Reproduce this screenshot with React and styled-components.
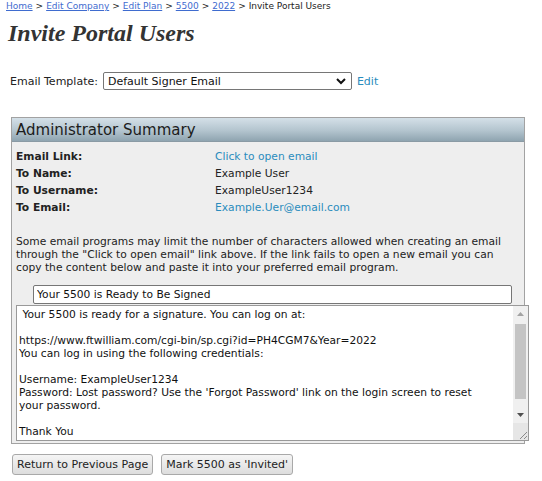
import React from "react";
import styled, { createGlobalStyle } from "styled-components";

const GlobalStyle = createGlobalStyle`
  body {
    margin: 0;
    background: #fff;
    font-family: "DejaVu Sans", Verdana, sans-serif;
    color: #222;
  }
`;

const Page = styled.div`
  padding: 0 0 0 6px;
  width: 536px;
`;

const Crumbs = styled.div`
  font-size: 9px;
  line-height: 12px;
  color: #222;
`;

const CrumbLink = styled.a`
  color: #3f6ccf;
  text-decoration: underline;
`;

const Sep = styled.span`
  margin: 0 3px;
`;

const Title = styled.h1`
  font-family: "Liberation Serif", "Times New Roman", serif;
  font-style: italic;
  font-weight: bold;
  font-size: 24px;
  line-height: 28px;
  color: #333;
  margin: 7px 0 0 2px;
`;

const TemplateRow = styled.div`
  display: flex;
  align-items: center;
  gap: 5px;
  margin: 25px 0 0 4px;
  font-size: 11px;
  height: 18px;
`;

const SelectWrap = styled.div`
  position: relative;
  width: 249px;
  height: 18px;
`;

const Select = styled.select`
  appearance: none;
  width: 100%;
  height: 18px;
  border: 1px solid #767676;
  border-radius: 2px;
  background: #fff;
  font-family: "DejaVu Sans", Verdana, sans-serif;
  font-size: 11px;
  padding: 0 0 0 4px;
  color: #111;
`;

const Chevron = styled.svg`
  position: absolute;
  right: 6px;
  top: 5px;
  pointer-events: none;
`;

const Link = styled.a`
  color: #2a8cbd;
  text-decoration: none;
`;

const Panel = styled.div`
  margin: 27px 0 0 5px;
  width: 512px;
  border: 1px solid #a2a2a2;
  background: #eeeeee;
  font-size: 10.7px;
`;

const PanelHead = styled.div`
  height: 23px;
  line-height: 24px;
  padding-left: 4px;
  font-size: 15px;
  color: #1c1c1c;
  background: linear-gradient(#d4e0e8, #b3c4ce 55%, #8fa4b0);
  border-bottom: 1px solid #8a9aa4;
`;

const PanelBody = styled.div`
  padding: 8px 0 0 4px;
`;

const InfoGrid = styled.div`
  display: grid;
  grid-template-columns: 199px 1fr;
  row-gap: 3px;
  line-height: 14px;
`;

const Label = styled.div`
  font-weight: bold;
  color: #222;
`;

const Value = styled.div`
  color: #222;
`;

const Note = styled.p`
  margin: 20px 0 0;
  line-height: 13px;
  color: #222;
  white-space: nowrap;
`;

const Subject = styled.input`
  display: block;
  box-sizing: border-box;
  margin: 11px 0 0 17px;
  width: 479px;
  height: 19px;
  border: 1px solid #767676;
  border-radius: 2px;
  padding: 0 3px;
  font-family: "DejaVu Sans", Verdana, sans-serif;
  font-size: 10.7px;
  color: #111;
  background: #fff;
`;

const BodyWrap = styled.div`
  position: relative;
  margin: 1px 0 2px 0;
  width: 513px;
  height: 136px;
`;

const Body = styled.textarea`
  display: block;
  box-sizing: border-box;
  width: 100%;
  height: 100%;
  border: 1px solid #999;
  padding: 2px 18px 0 2px;
  font-family: "DejaVu Sans", Verdana, sans-serif;
  font-size: 10.7px;
  line-height: 13px;
  color: #111;
  background: #fff;
  resize: none;
  overflow: hidden;
  white-space: pre;
`;

const Scrollbar = styled.div`
  position: absolute;
  top: 1px;
  right: 1px;
  bottom: 1px;
  width: 15px;
  display: flex;
  flex-direction: column;
  background: #f0f0f0;
`;

const ArrowBtn = styled.div`
  height: 16px;
  display: flex;
  align-items: center;
  justify-content: center;
`;

const Track = styled.div`
  flex: 1;
  padding: 2px 2px 8px;
  display: flex;
  flex-direction: column;
`;

const Thumb = styled.div`
  height: 75px;
  background: #c4c4c4;
`;

const Corner = styled.div`
  height: 17px;
  background: #e6e6e6;
  display: flex;
  align-items: flex-end;
  justify-content: flex-end;
`;

const Buttons = styled.div`
  display: flex;
  gap: 8px;
  margin: 10px 0 0 6px;
`;

const Button = styled.button`
  font-family: "DejaVu Sans", Verdana, sans-serif;
  font-size: 11px;
  height: 21px;
  padding: 0 4px;
  color: #222;
  border: 1px solid #a9a9a9;
  border-radius: 3px;
  background: linear-gradient(#f5f5f5, #dddddd);
`;

const emailText = ` Your 5500 is ready for a signature. You can log on at:

https://www.ftwilliam.com/cgi-bin/sp.cgi?id=PH4CGM7&Year=2022
You can log in using the following credentials:

Username: ExampleUser1234
Password: Lost password? Use the 'Forgot Password' link on the login screen to reset
your password.

Thank You`;

const rows = [
  ["Email Link:", "Click to open email", true],
  ["To Name:", "Example User", false],
  ["To Username:", "ExampleUser1234", false],
  ["To Email:", "Example.Uer@email.com", true],
];

export default function App() {
  return (
    <Page>
      <GlobalStyle />
      <Crumbs>
        <CrumbLink>Home</CrumbLink><Sep>&gt;</Sep>
        <CrumbLink>Edit Company</CrumbLink><Sep>&gt;</Sep>
        <CrumbLink>Edit Plan</CrumbLink><Sep>&gt;</Sep>
        <CrumbLink>5500</CrumbLink><Sep>&gt;</Sep>
        <CrumbLink>2022</CrumbLink><Sep>&gt;</Sep>
        Invite Portal Users
      </Crumbs>
      <Title>Invite Portal Users</Title>
      <TemplateRow>
        <span>Email Template:</span>
        <SelectWrap>
          <Select defaultValue="signer">
            <option value="signer">Default Signer Email</option>
          </Select>
          <Chevron width="10" height="8" viewBox="0 0 10 8">
            <path d="M1 2 L5 6 L9 2" stroke="#111" strokeWidth="2" fill="none" />
          </Chevron>
        </SelectWrap>
        <Link>Edit</Link>
      </TemplateRow>
      <Panel>
        <PanelHead>Administrator Summary</PanelHead>
        <PanelBody>
          <InfoGrid>
            {rows.map(([label, value, isLink]) => (
              <React.Fragment key={label}>
                <Label>{label}</Label>
                {isLink ? <Value><Link>{value}</Link></Value> : <Value>{value}</Value>}
              </React.Fragment>
            ))}
          </InfoGrid>
          <Note>
            Some email programs may limit the number of characters allowed when creating an email
            <br />
            through the "Click to open email" link above. If the link fails to open a new email you can
            <br />
            copy the content below and paste it into your preferred email program.
          </Note>
          <Subject defaultValue="Your 5500 is Ready to Be Signed" />
          <BodyWrap>
            <Body defaultValue={emailText} />
            <Scrollbar>
              <ArrowBtn>
                <svg width="7" height="4" viewBox="0 0 7 4">
                  <path d="M0 4 L3.5 0 L7 4 Z" fill="#a3a3a3" />
                </svg>
              </ArrowBtn>
              <Track>
                <Thumb />
              </Track>
              <ArrowBtn>
                <svg width="7" height="4" viewBox="0 0 7 4">
                  <path d="M0 0 L3.5 4 L7 0 Z" fill="#505050" />
                </svg>
              </ArrowBtn>
              <Corner>
                <svg width="10" height="10" viewBox="0 0 10 10">
                  <path d="M9 2 L2 9 M9 6 L6 9" stroke="#8a8a8a" strokeWidth="1" />
                </svg>
              </Corner>
            </Scrollbar>
          </BodyWrap>
        </PanelBody>
      </Panel>
      <Buttons>
        <Button>Return to Previous Page</Button>
        <Button>Mark 5500 as 'Invited'</Button>
      </Buttons>
    </Page>
  );
}
